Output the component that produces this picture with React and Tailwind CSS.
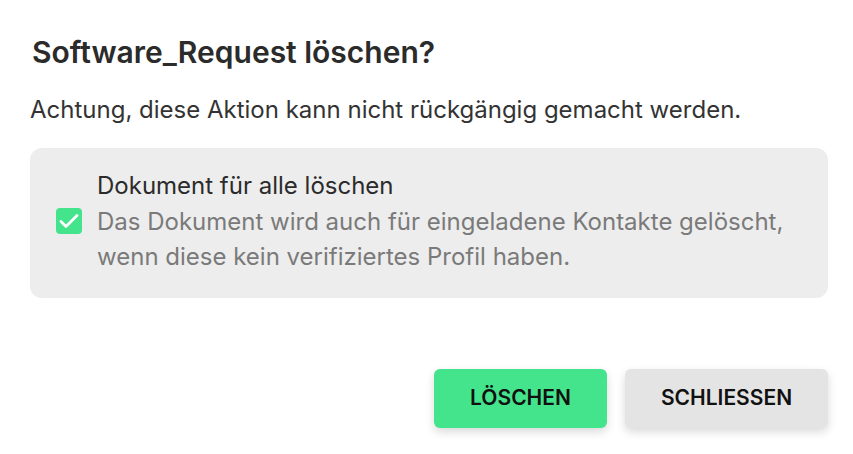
import React, { useState } from 'react';

const DeleteDialog = () => {
  const [forAll, setForAll] = useState(true);

  return (
    <div className="w-[853px] h-[454px] bg-white pl-[30px] pr-[25px] pt-[30px] font-['Inter',sans-serif]">
      <h1 className="text-[30px] leading-[44px] font-semibold text-[#2b2b2b] pl-[2px]">Software_Request löschen?</h1>
      <p className="mt-[21px] text-[24px] leading-[30px] text-[#333333]">
        Achtung, diese Aktion kann nicht rückgängig gemacht werden.
      </p>

      <label className="mt-[23px] flex items-center gap-[15px] rounded-xl bg-[#ededed] pl-[26px] pr-6 pt-[20px] pb-[23px] cursor-pointer">
        <button
          type="button"
          onClick={() => setForAll(!forAll)}
          className={`flex h-[26px] w-[26px] shrink-0 items-center justify-center rounded-[4px] ${forAll ? 'bg-[#44e48c]' : 'bg-white border border-gray-400'}`}
        >
          {forAll && (
            <svg width="26" height="26" viewBox="0 0 26 26" fill="none" stroke="white" strokeWidth="2.8" strokeLinecap="round" strokeLinejoin="round">
              <path d="M5 13.5l5 5L21 7.5" />
            </svg>
          )}
        </button>
        <div className="text-[24px] leading-[35.5px]">
          <div className="text-[#2b2b2b]">Dokument für alle löschen</div>
          <div className="text-[#7a7a7a]">
            Das Dokument wird auch für eingeladene Kontakte gelöscht,
            <br />
            wenn diese kein verifiziertes Profil haben.
          </div>
        </div>
      </label>

      <div className="mt-[71px] flex justify-end gap-[18px]">
        <button className="h-[59px] w-[173px] rounded-md bg-[#44e48c] text-[21px] font-semibold text-[#111] shadow-[0_4px_10px_rgba(0,0,0,0.15)]">
          LÖSCHEN
        </button>
        <button className="h-[59px] w-[203px] rounded-md bg-[#e4e4e4] text-[21px] font-semibold text-[#111] shadow-[0_4px_10px_rgba(0,0,0,0.15)]">
          SCHLIESSEN
        </button>
      </div>
    </div>
  );
};

export default function App() {
  return <DeleteDialog />;
}
